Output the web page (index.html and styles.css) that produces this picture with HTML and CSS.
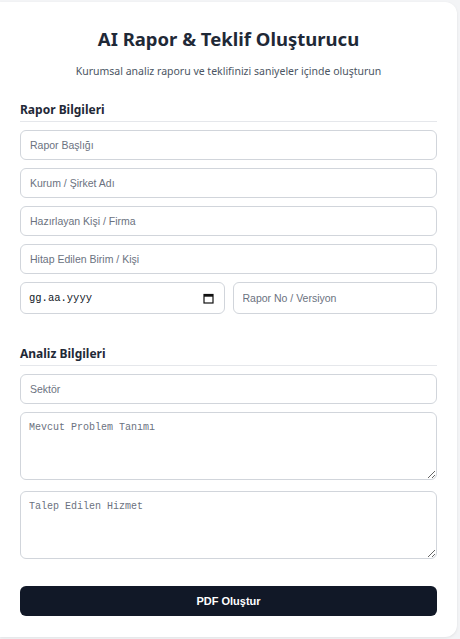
FILE: index.html
```html
<!DOCTYPE html>
<html lang="tr">
<head>
<meta charset="utf-8">
<title>AI Rapor &amp; Teklif Oluşturucu</title>
<link rel="stylesheet" href="styles.css">
</head>
<body>
<main class="card">
  <h1 class="title">AI Rapor &amp; Teklif Oluşturucu</h1>
  <p class="subtitle">Kurumsal analiz raporu ve teklifinizi saniyeler içinde oluşturun</p>

  <section class="section">
    <h2 class="section-title">Rapor Bilgileri</h2>
    <div class="fields">
      <input class="field" type="text" placeholder="Rapor Başlığı">
      <input class="field" type="text" placeholder="Kurum / Şirket Adı">
      <input class="field" type="text" placeholder="Hazırlayan Kişi / Firma">
      <input class="field" type="text" placeholder="Hitap Edilen Birim / Kişi">
      <div class="row">
        <div class="field date-field">
          <span class="date-text">gg.aa.yyyy</span>
          <svg class="cal" width="11" height="11" viewBox="0 0 11 11" aria-hidden="true">
            <rect x="1" y="1.5" width="9" height="8.5" fill="none" stroke="#111" stroke-width="1.2"/>
            <rect x="1" y="1.5" width="9" height="2.2" fill="#111"/>
          </svg>
        </div>
        <input class="field" type="text" placeholder="Rapor No / Versiyon">
      </div>
    </div>
  </section>

  <section class="section section-analiz">
    <h2 class="section-title">Analiz Bilgileri</h2>
    <div class="fields">
      <input class="field" type="text" placeholder="Sektör">
      <textarea class="area" placeholder="Mevcut Problem Tanımı"></textarea>
      <textarea class="area area-second" placeholder="Talep Edilen Hizmet"></textarea>
    </div>
  </section>

  <button class="submit" type="button">PDF Oluştur</button>
</main>
</body>
</html>
```

FILE: styles.css
```css
* { box-sizing: border-box; }

html, body {
  margin: 0;
  padding: 0;
  background: #f3f4f6;
}

body {
  padding: 2px 3px 2px 0;
  font-family: "Noto Sans", "Open Sans", sans-serif;
  color: #1f2937;
}

.card {
  background: #ffffff;
  border-radius: 0 12px 12px 0;
  box-shadow: 0 1px 3px rgba(0, 0, 0, 0.08);
  padding: 23px 20px 21px 20px;
  min-height: 635px;
}

.title {
  margin: 0;
  text-align: center;
  font-size: 18.5px;
  line-height: 28px;
  font-weight: 700;
  color: #1f2937;
}

.subtitle {
  margin: 10px 0 0 0;
  text-align: center;
  font-size: 10.5px;
  line-height: 16px;
  color: #4b5563;
}

.section { margin-top: 22px; }
.section-analiz { margin-top: 31px; }

.section-title {
  margin: 0 0 8px 0;
  font-size: 12px;
  line-height: 18px;
  font-weight: 700;
  color: #1f2937;
  padding-bottom: 2px;
  border-bottom: 1px solid #e5e7eb;
}

.fields {
  display: flex;
  flex-direction: column;
  gap: 8px;
}

.field {
  display: block;
  width: 100%;
  height: 30px;
  margin: 0;
  padding: 0 9px;
  border: 1px solid #d1d5db;
  border-radius: 6px;
  background: #fff;
  font-family: "Liberation Sans", Arial, sans-serif;
  font-size: 10.5px;
  color: #111827;
  outline: none;
}

.field::placeholder { color: #6b7280; }

.row {
  display: grid;
  grid-template-columns: 1fr 1fr;
  gap: 8px;
}

.row .field { height: 32px; }

.date-field {
  display: flex;
  align-items: center;
  justify-content: space-between;
  padding: 0 10px 0 8px;
}

.date-text {
  font-family: "Liberation Mono", "DejaVu Sans Mono", monospace;
  font-size: 10.5px;
  color: #111827;
}

.cal { display: block; }

.area {
  display: block;
  width: 100%;
  height: 68px;
  margin: 0;
  padding: 8px 8px;
  border: 1px solid #d1d5db;
  border-radius: 6px;
  background: #fff;
  font-family: "Liberation Mono", "DejaVu Sans Mono", monospace;
  font-size: 10px;
  line-height: 13px;
  color: #111827;
  outline: none;
}

.area::placeholder { color: #6b7280; }

.area-second { margin-top: 3px; }

.submit {
  display: block;
  width: 100%;
  height: 30px;
  margin: 27px 0 0 0;
  border: 0;
  border-radius: 6px;
  background: #111827;
  color: #fff;
  font-family: "Liberation Sans", Arial, sans-serif;
  font-size: 11px;
  font-weight: 700;
  cursor: pointer;
}
```
